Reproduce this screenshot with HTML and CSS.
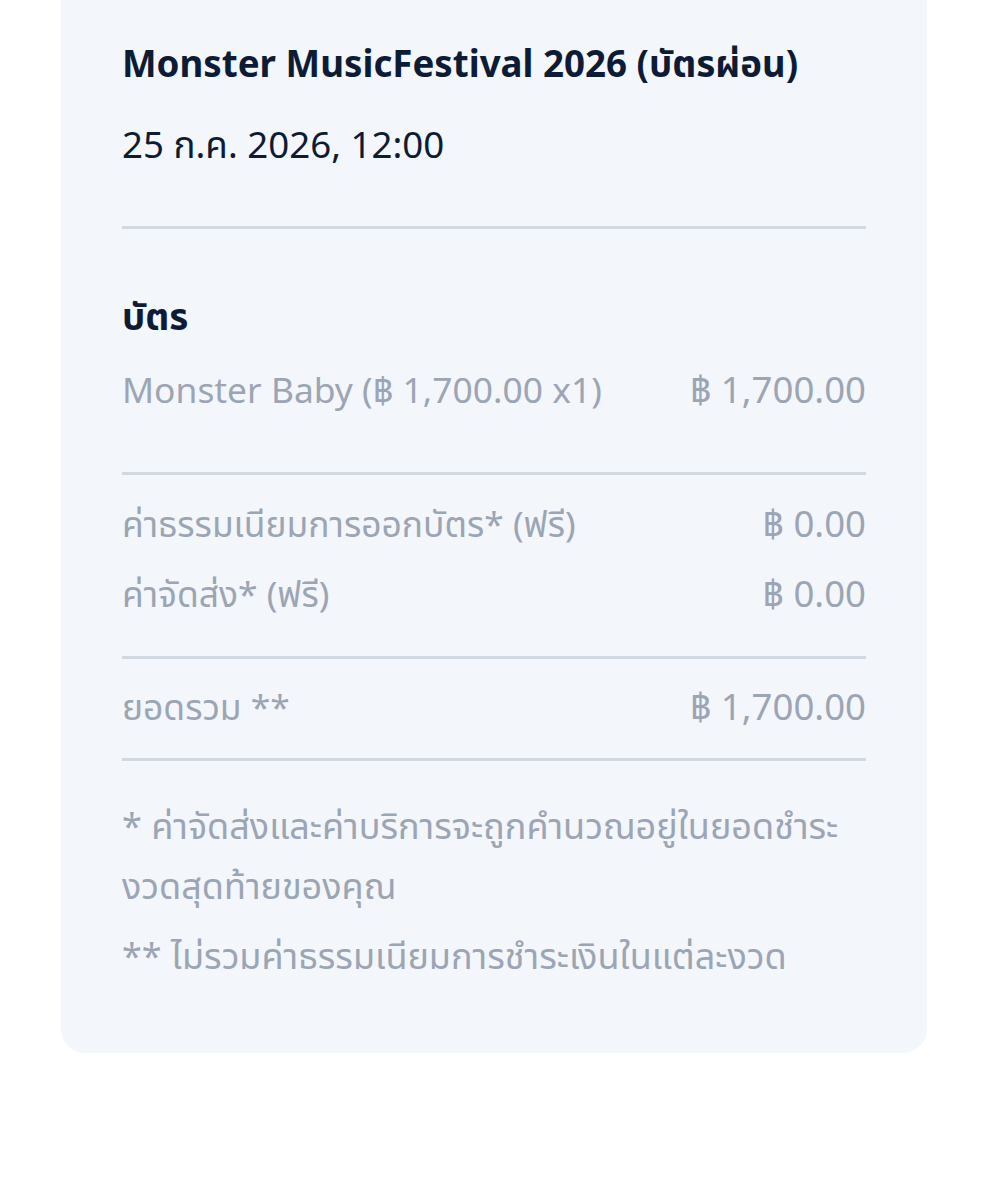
FILE: index.html
```html
<!DOCTYPE html>
<html lang="th">
<head>
  <meta charset="UTF-8">
  <meta name="viewport" content="width=device-width, initial-scale=1.0">
  <title>สรุปคำสั่งซื้อ</title>
  <link rel="stylesheet" href="styles.css">
</head>
<body>

  <div class="summary">
    <h2 class="event-title">Monster MusicFestival 2026 (บัตรผ่อน)</h2>
    <p class="event-date">25 ก.ค. 2026, 12:00</p>

    <hr class="line line-event">

    <h3 class="section-title">บัตร</h3>
    <div class="row row-ticket">
      <span>Monster Baby (฿ 1,700.00 x1)</span>
      <span class="price">฿ 1,700.00</span>
    </div>

    <hr class="line line-tickets">

    <div class="row row-fee">
      <span>ค่าธรรมเนียมการออกบัตร* (ฟรี)</span>
      <span class="price">฿ 0.00</span>
    </div>
    <div class="row row-delivery">
      <span>ค่าจัดส่ง* (ฟรี)</span>
      <span class="price">฿ 0.00</span>
    </div>

    <hr class="line line-fees">

    <div class="row row-total">
      <span>ยอดรวม **</span>
      <span class="price">฿ 1,700.00</span>
    </div>

    <hr class="line line-total">

    <p class="note">* ค่าจัดส่งและค่าบริการจะถูกคำนวณอยู่ในยอดชำระ<br>งวดสุดท้ายของคุณ</p>
    <p class="note note-second">** ไม่รวมค่าธรรมเนียมการชำระเงินในแต่ละงวด</p>
  </div>

</body>
</html>
```

FILE: styles.css
```css
body {
  font-family: "Noto Sans", "Noto Sans Thai", "DejaVu Sans", sans-serif;
  background-color: #ffffff;
  margin: 0;
  padding: 0;
}
.summary {
  margin: 0 61px;
  padding: 38px 61px 67px;
  background-color: #f3f6fb;
  border-radius: 0 0 24px 24px;
}
.event-title {
  margin: 0;
  font-size: 36.7px;
  line-height: 50px;
  font-weight: 700;
  color: #0c1c36;
}
.event-date {
  margin: 31px 0 0;
  font-size: 36.7px;
  line-height: 50px;
  color: #0c1c36;
}
.line {
  border: none;
  border-top: 3px solid #d2d8e0;
  margin: 0;
}
.line-event {
  margin-top: 57px;
}
.section-title {
  margin: 62px 0 0;
  font-size: 36.7px;
  line-height: 50px;
  font-weight: 700;
  color: #0c1c36;
}
.row {
  display: flex;
  justify-content: space-between;
  align-items: baseline;
  font-size: 35.4px;
  line-height: 50px;
  color: #9ba5b4;
}
.row .price {
  font-size: 36.6px;
}
.row-ticket {
  margin-top: 23px;
}
.line-tickets {
  margin-top: 58px;
}
.row-fee {
  margin-top: 23px;
}
.row-delivery {
  margin-top: 20px;
}
.line-fees {
  margin-top: 38px;
}
.row-total {
  margin-top: 22px;
}
.line-total {
  margin-top: 27px;
}
.note {
  margin: 35px 0 0;
  font-size: 36px;
  line-height: 60px;
  color: #9ba5b4;
}
.note-second {
  margin-top: 10px;
}
```
